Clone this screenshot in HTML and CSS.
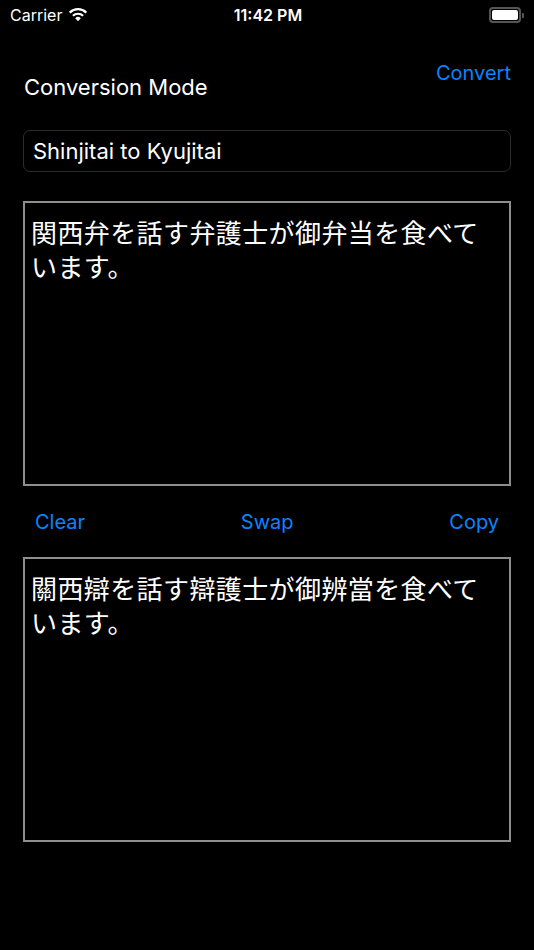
FILE: index.html
```html
<!DOCTYPE html>
<html>
  <head>
    <title>Kyujitai Converter</title>
    <link rel="stylesheet" href="styles.css">
  </head>
  <body>
    <div class="status-bar">
      <div class="status-left">
        <span>Carrier</span>
        <svg class="wifi" width="20" height="15" viewBox="0 0 20 15">
          <path d="M10 14.2 L7.2 11.2 A4 4 0 0 1 12.8 11.2 Z" fill="#fff"/>
          <path d="M4.9 8.8 A7.4 7.4 0 0 1 15.1 8.8" stroke="#fff" stroke-width="2.2" fill="none"/>
          <path d="M1.7 5.6 A11.8 11.8 0 0 1 18.3 5.6" stroke="#fff" stroke-width="2.2" fill="none"/>
        </svg>
      </div>
      <div class="status-time">11:42 PM</div>
      <div class="status-right">
        <div class="battery"><div class="battery-fill"></div></div>
        <div class="battery-nub"></div>
      </div>
    </div>

    <div class="page">
      <div class="header">
        <h1 class="title">Conversion Mode</h1>
        <button class="link-button">Convert</button>
      </div>

      <div class="mode-field">Shinjitai to Kyujitai</div>

      <div class="text-box">関西弁を話す弁護士が御弁当を食べています。</div>

      <div class="actions">
        <button class="link-button">Clear</button>
        <button class="link-button">Swap</button>
        <button class="link-button">Copy</button>
      </div>

      <div class="text-box">關西辯を話す辯護士が御辨當を食べています。</div>
    </div>
  </body>
</html>
```

FILE: styles.css
```css
body {
  margin: 0;
  padding: 0;
  background-color: #000;
  color: #fff;
  font-family: Inter, "Noto Sans", "Noto Sans CJK JP", sans-serif;
}

.status-bar {
  display: grid;
  grid-template-columns: 1fr auto 1fr;
  align-items: center;
  height: 30px;
  padding: 0 10px;
  font-size: 16px;
}

.status-left {
  display: flex;
  align-items: center;
  gap: 6px;
}

.wifi {
  margin-top: -2px;
}

.status-time {
  font-weight: 600;
  font-size: 16px;
  margin-left: 2px;
}

.status-right {
  display: flex;
  align-items: center;
  justify-content: flex-end;
}

.battery {
  width: 26px;
  height: 10px;
  border: 2px solid #555;
  border-radius: 4px;
  padding: 1px;
}

.battery-fill {
  height: 100%;
  background-color: #fff;
  border-radius: 2px;
}

.battery-nub {
  width: 2px;
  height: 5px;
  margin-left: 1px;
  background-color: #555;
  border-radius: 0 1px 1px 0;
}

.page {
  padding: 0 23px;
}

.header {
  display: flex;
  justify-content: space-between;
  align-items: flex-start;
  margin-top: 31px;
}

.title {
  margin: 13px 0 0 1px;
  font-size: 22px;
  line-height: 26px;
  font-weight: 400;
}

.link-button {
  padding: 0;
  border: none;
  background: none;
  color: #0a84ff;
  font-family: inherit;
  font-size: 20px;
  line-height: 24px;
  cursor: pointer;
}

.mode-field {
  margin-top: 30px;
  height: 40px;
  padding-left: 9px;
  border: 1px solid #2c2c2e;
  border-radius: 7px;
  font-size: 22px;
  line-height: 40px;
}

.text-box {
  margin-top: 29px;
  height: 257px;
  padding: 12px 20px 12px 6px;
  border: 2px solid #8e8e8e;
  font-family: "Noto Sans CJK JP", sans-serif;
  font-size: 26px;
  line-height: 34px;
  letter-spacing: 0.4px;
}

.actions {
  display: flex;
  justify-content: space-between;
  margin-top: 24px;
  padding: 0 12px;
}

.actions + .text-box {
  margin-top: 23px;
}
```
